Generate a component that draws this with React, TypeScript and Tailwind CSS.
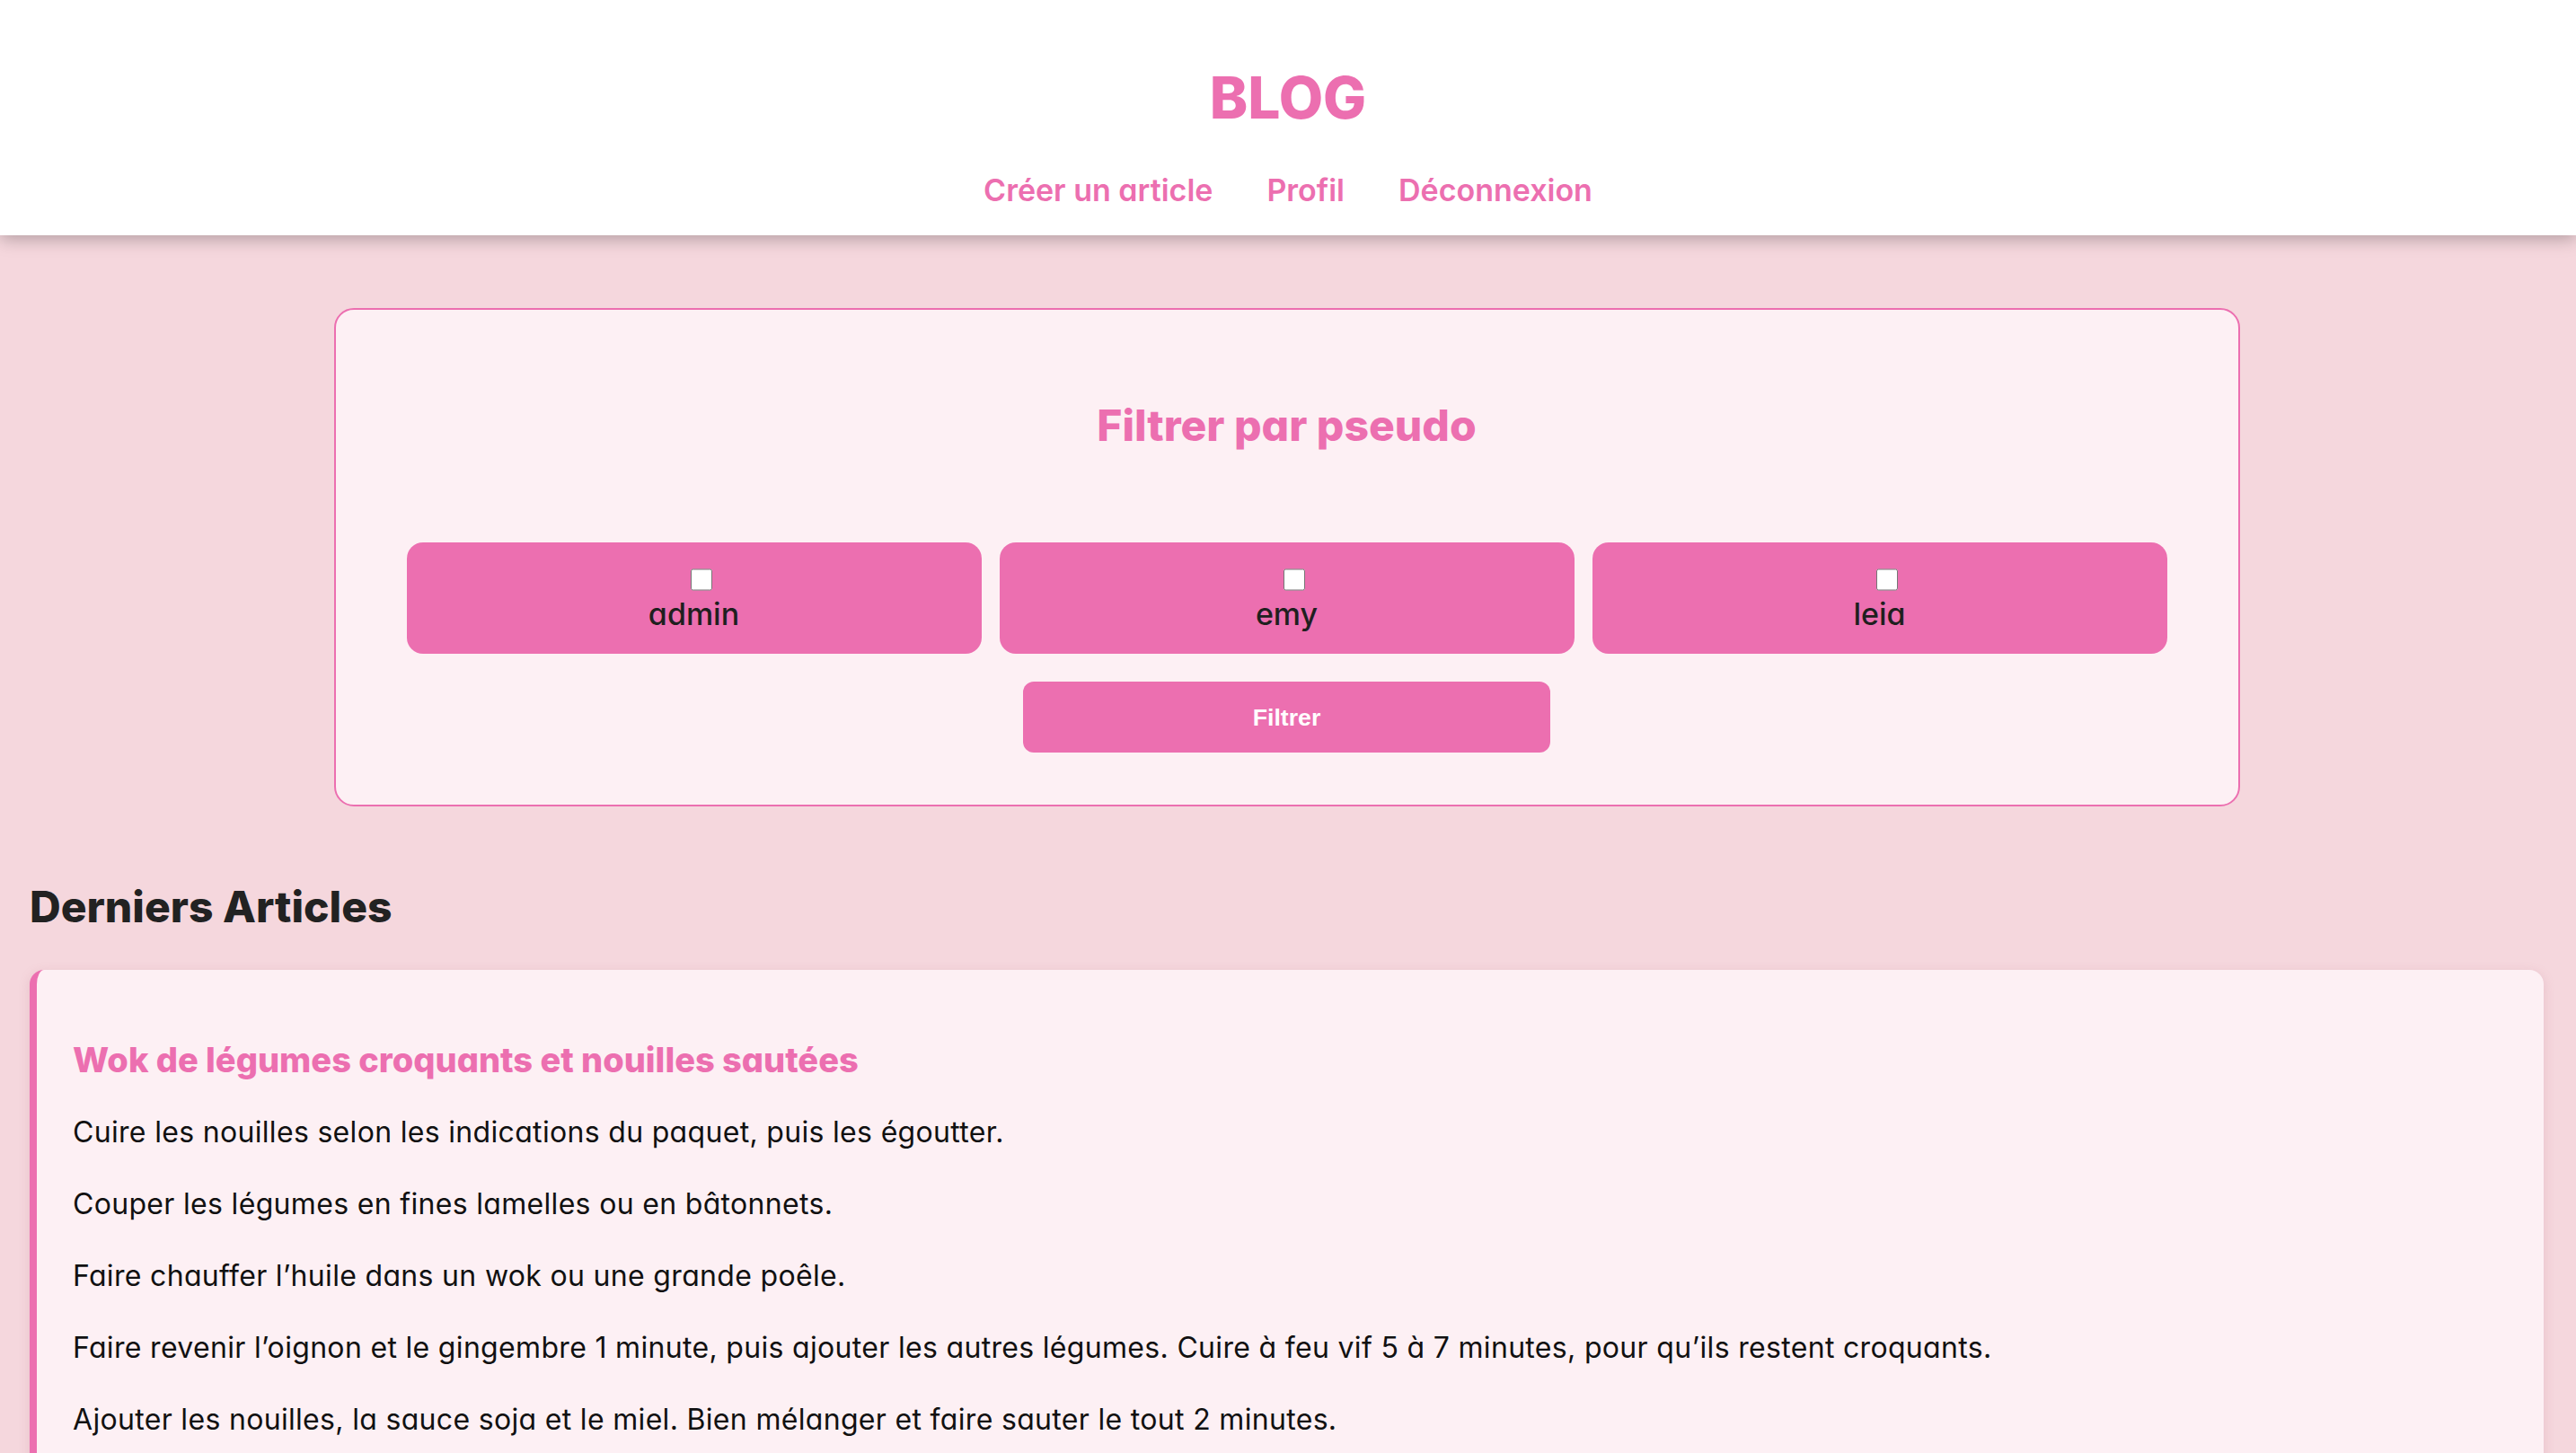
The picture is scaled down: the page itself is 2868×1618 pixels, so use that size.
import React from 'react';

const users = ['admin', 'emy', 'leia'];

const steps = [
  'Cuire les nouilles selon les indications du paquet, puis les égoutter.',
  'Couper les légumes en fines lamelles ou en bâtonnets.',
  'Faire chauffer l’huile dans un wok ou une grande poêle.',
  'Faire revenir l’oignon et le gingembre 1 minute, puis ajouter les autres légumes. Cuire à feu vif 5 à 7 minutes, pour qu’ils restent croquants.',
  'Ajouter les nouilles, la sauce soja et le miel. Bien mélanger et faire sauter le tout 2 minutes.',
];

const Header: React.FC = () => (
  <header className="relative z-10 flex h-[262px] flex-col items-center bg-white pt-[70px] shadow-[0_4px_18px_rgba(0,0,0,0.28)]">
    <h1 className="text-[64px] font-extrabold leading-[77px] text-[#ec6fb0]">BLOG</h1>
    <nav className="mt-[44px] flex gap-[60px] text-[34px] font-semibold leading-[41px] text-[#ec6fb0]">
      <a href="#">Créer un article</a>
      <a href="#">Profil</a>
      <a href="#">Déconnexion</a>
    </nav>
  </header>
);

const UserFilter: React.FC = () => (
  <section className="mx-auto w-[2122px] rounded-[22px] border-2 border-[#ec6fb0] bg-[#fdf0f4] px-[79px] pb-[58px] pt-[100px]">
    <h2 className="text-center text-[48px] font-extrabold leading-[58px] text-[#ec6fb0]">Filtrer par pseudo</h2>
    <div className="mt-[101px] grid grid-cols-3 gap-[20px]">
      {users.map((u) => (
        <label
          key={u}
          className="flex h-[124px] cursor-pointer flex-col items-center rounded-[18px] bg-[#ec6fb0] pt-[29px] text-[34px] font-medium leading-[40px] text-[#1f1f1f]"
        >
          <input type="checkbox" className="ml-[16px] h-[25px] w-[24px]" />
          <span className="mt-[6px]">{u}</span>
        </label>
      ))}
    </div>
    <button className="mx-auto mt-[31px] block h-[79px] w-[587px] rounded-[12px] bg-[#ec6fb0] font-['Liberation_Sans',Arial,sans-serif] text-[26.67px] font-bold text-white">
      Filtrer
    </button>
  </section>
);

const ArticleCard: React.FC = () => (
  <article className="rounded-[16px] border-l-[8px] border-[#ec6fb0] bg-[#fdf0f4] px-[40px] pt-[40px] pb-[60px] shadow-[0_3px_12px_rgba(190,120,140,0.25)]">
    <h3 className="mt-[37px] mb-[34px] text-[38px] font-extrabold leading-[46px] text-[#ec6fb0]">
      Wok de légumes croquants et nouilles sautées
    </h3>
    {steps.map((s, i) => (
      <p key={i} className="mb-[32px] text-[32px] leading-[48px] tracking-[0.01em] text-[#111]">
        {s}
      </p>
    ))}
  </article>
);

export default function App() {
  return (
    <div className="min-h-screen bg-[#f5d7dd] font-['Inter',sans-serif] [font-feature-settings:'cv11']">
      <Header />
      <main className="pl-[33px] pr-[36px] pt-[81px]">
        <UserFilter />
        <h2 className="mt-[83px] mb-[41px] text-[48px] font-extrabold leading-[58px] text-[#222]">Derniers Articles</h2>
        <ArticleCard />
      </main>
    </div>
  );
}
